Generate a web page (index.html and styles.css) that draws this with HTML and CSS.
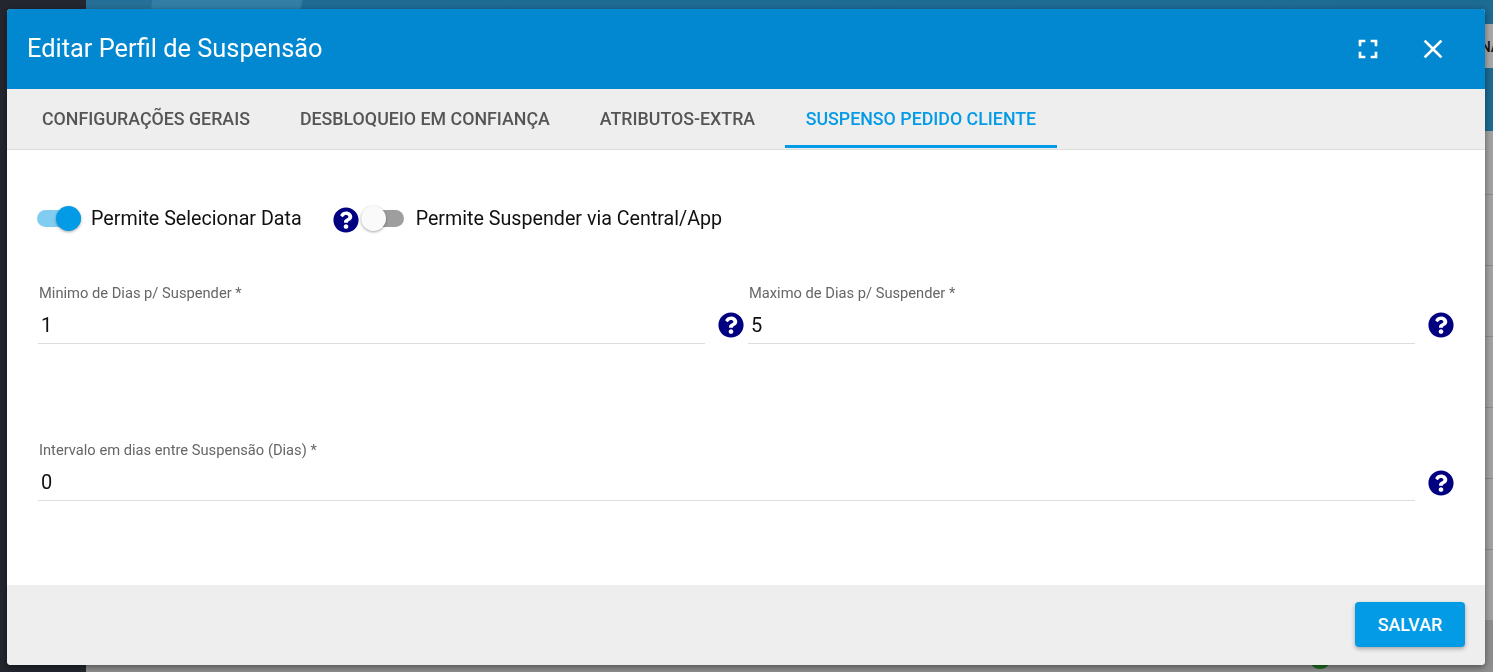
FILE: index.html
```html
<!DOCTYPE html>
<html lang="pt-BR">
<head>
<meta charset="utf-8">
<title>Editar Perfil de Suspensão</title>
<link rel="stylesheet" href="styles.css">
</head>
<body>
<div class="backdrop">
  <aside class="side"></aside>
  <div class="page">
    <div class="band-a"></div>
    <div class="band-b"><span class="band-text">NA</span></div>
    <div class="band-c"></div>
    <div class="rows">
      <div class="row"></div><div class="row"></div><div class="row"></div><div class="row"></div><div class="row"></div><div class="row"></div><div class="row"></div>
      <span class="dot"></span>
    </div>
  </div>
</div>
<section class="modal">
  <header class="head">
    <h1 class="title">Editar Perfil de Suspensão</h1>
    <div class="head-icons">
      <svg class="head-icon" viewBox="0 0 24 24"><path d="M7 14H5v5h5v-2H7v-3zm-2-4h2V7h3V5H5v5zm12 7h-3v2h5v-5h-2v3zM14 5v2h3v3h2V5h-5z"/></svg>
      <svg class="head-icon" viewBox="0 0 24 24"><path d="M19 6.41L17.59 5 12 10.59 6.41 5 5 6.41 10.59 12 5 17.59 6.41 19 12 13.41 17.59 19 19 17.59 13.41 12z"/></svg>
    </div>
  </header>
  <nav class="tabs">
    <div class="tab">Configurações Gerais</div>
    <div class="tab">Desbloqueio em Confiança</div>
    <div class="tab">Atributos-Extra</div>
    <div class="tab tab-active">Suspenso Pedido Cliente</div>
  </nav>
  <main class="content">
    <div class="toggles">
      <div class="toggle toggle-on"><span class="track"></span><span class="thumb"></span></div>
      <span class="toggle-label first-label">Permite Selecionar Data</span>
      <svg class="help" viewBox="0 0 512 512"><path d="M504 256c0 136.997-111.043 248-248 248S8 392.997 8 256C8 119.083 119.043 8 256 8s248 111.083 248 248zM262.655 90c-54.497 0-89.255 22.957-116.549 63.758-3.536 5.286-2.353 12.415 2.715 16.258l34.699 26.31c5.205 3.947 12.621 3.008 16.665-2.122 17.864-22.658 30.113-35.797 57.303-35.797 20.429 0 45.698 13.148 45.698 32.958 0 14.976-12.363 22.667-32.534 33.976C247.128 238.528 216 254.941 216 296v4c0 6.627 5.373 12 12 12h56c6.627 0 12-5.373 12-12v-1.333c0-28.462 83.186-29.647 83.186-106.667 0-58.002-60.165-102-116.531-102zM256 338c-25.365 0-46 20.635-46 46 0 25.364 20.635 46 46 46s46-20.636 46-46c0-25.365-20.635-46-46-46z"/></svg>
      <div class="toggle toggle-off"><span class="track"></span><span class="thumb"></span></div>
      <span class="toggle-label">Permite Suspender via Central/App</span>
    </div>
    <div class="fields">
      <div class="cell">
        <div class="field"><label class="label">Minimo de Dias p/ Suspender *</label><div class="value">1</div></div>
        <svg class="help" viewBox="0 0 512 512"><path d="M504 256c0 136.997-111.043 248-248 248S8 392.997 8 256C8 119.083 119.043 8 256 8s248 111.083 248 248zM262.655 90c-54.497 0-89.255 22.957-116.549 63.758-3.536 5.286-2.353 12.415 2.715 16.258l34.699 26.31c5.205 3.947 12.621 3.008 16.665-2.122 17.864-22.658 30.113-35.797 57.303-35.797 20.429 0 45.698 13.148 45.698 32.958 0 14.976-12.363 22.667-32.534 33.976C247.128 238.528 216 254.941 216 296v4c0 6.627 5.373 12 12 12h56c6.627 0 12-5.373 12-12v-1.333c0-28.462 83.186-29.647 83.186-106.667 0-58.002-60.165-102-116.531-102zM256 338c-25.365 0-46 20.635-46 46 0 25.364 20.635 46 46 46s46-20.636 46-46c0-25.365-20.635-46-46-46z"/></svg>
      </div>
      <div class="cell">
        <div class="field"><label class="label">Maximo de Dias p/ Suspender *</label><div class="value">5</div></div>
        <svg class="help" viewBox="0 0 512 512"><path d="M504 256c0 136.997-111.043 248-248 248S8 392.997 8 256C8 119.083 119.043 8 256 8s248 111.083 248 248zM262.655 90c-54.497 0-89.255 22.957-116.549 63.758-3.536 5.286-2.353 12.415 2.715 16.258l34.699 26.31c5.205 3.947 12.621 3.008 16.665-2.122 17.864-22.658 30.113-35.797 57.303-35.797 20.429 0 45.698 13.148 45.698 32.958 0 14.976-12.363 22.667-32.534 33.976C247.128 238.528 216 254.941 216 296v4c0 6.627 5.373 12 12 12h56c6.627 0 12-5.373 12-12v-1.333c0-28.462 83.186-29.647 83.186-106.667 0-58.002-60.165-102-116.531-102zM256 338c-25.365 0-46 20.635-46 46 0 25.364 20.635 46 46 46s46-20.636 46-46c0-25.365-20.635-46-46-46z"/></svg>
      </div>
      <div class="cell cell-wide">
        <div class="field"><label class="label">Intervalo em dias entre Suspensão (Dias) *</label><div class="value">0</div></div>
        <svg class="help" viewBox="0 0 512 512"><path d="M504 256c0 136.997-111.043 248-248 248S8 392.997 8 256C8 119.083 119.043 8 256 8s248 111.083 248 248zM262.655 90c-54.497 0-89.255 22.957-116.549 63.758-3.536 5.286-2.353 12.415 2.715 16.258l34.699 26.31c5.205 3.947 12.621 3.008 16.665-2.122 17.864-22.658 30.113-35.797 57.303-35.797 20.429 0 45.698 13.148 45.698 32.958 0 14.976-12.363 22.667-32.534 33.976C247.128 238.528 216 254.941 216 296v4c0 6.627 5.373 12 12 12h56c6.627 0 12-5.373 12-12v-1.333c0-28.462 83.186-29.647 83.186-106.667 0-58.002-60.165-102-116.531-102zM256 338c-25.365 0-46 20.635-46 46 0 25.364 20.635 46 46 46s46-20.636 46-46c0-25.365-20.635-46-46-46z"/></svg>
      </div>
    </div>
  </main>
  <footer class="foot">
    <button class="save" type="button">SALVAR</button>
  </footer>
</section>
</body>
</html>
```
FILE: styles.css
```css
* { box-sizing: border-box; }
html, body { margin: 0; height: 100%; overflow: hidden; }
body { font-family: Roboto, "Liberation Sans", sans-serif; color: #111; background: #23262f; }

.backdrop { display: flex; height: 672px; }
.side { width: 86px; flex: none; background: #23262f; }
.page { flex: 1; display: flex; flex-direction: column; overflow: hidden; }
.band-a { height: 24px; flex: none; background: linear-gradient(100deg, #266f98 0, #266f98 65px, #327ea5 66px, #327ea5 212px, #1f6b94 214px, #1d6a93 100%); }
.band-b { height: 44px; flex: none; background: #a8a8a8; text-align: right; font-size: 14px; line-height: 47px; font-weight: 500; color: #111; white-space: nowrap; overflow: hidden; }
.band-text { display: inline-block; margin-right: -7px; }
.band-c { height: 63px; flex: none; background: #1e6a92; }
.rows { flex: 1; position: relative; background: #8e8e8e; }
.row { height: 71px; background: #a2a2a2; border-bottom: 1px solid #8a8a8a; margin-left: 40px; border-left: 1px solid #8a8a8a; }
.row:first-child { height: 64px; }
.dot { position: absolute; left: 1223px; top: 516px; width: 22px; height: 22px; border-radius: 50%; background: #1a6d1c; }

.modal { position: fixed; left: 7px; top: 9px; width: 1478px; height: 656px; display: flex; flex-direction: column; border-radius: 4px; overflow: hidden; background: #fff; box-shadow: 0 2px 6px rgba(0, 0, 0, .45); }

.head { height: 80px; flex: none; display: flex; align-items: center; justify-content: space-between; background: #0288d1; color: #fff; padding-left: 20px; }
.title { margin: 0; font-size: 25.4px; font-weight: 400; line-height: 32px; position: relative; top: -1px; }
.head-icons { display: flex; gap: 33px; padding-right: 36px; }
.head-icon { width: 32px; height: 32px; fill: #fff; display: block; }

.tabs { height: 61px; flex: none; display: flex; gap: 10px; padding-left: 15px; background: #eee; border-bottom: 1px solid #ddd; }
.tab { padding: 0 20px; font-size: 17.8px; font-weight: 500; line-height: 60px; text-transform: uppercase; color: #555; border-bottom: 3px solid transparent; height: 59px; white-space: nowrap; }
.tab-active { color: #039be5; border-bottom-color: #039be5; padding: 0 20.5px; }

.content { flex: 1; padding: 55px 27px 0 30px; min-height: 0; }

.toggles { display: flex; align-items: center; height: 27px; }
.toggle { position: relative; width: 44px; height: 25px; flex: none; }
.track { position: absolute; left: 0; right: 0; top: 4px; height: 17px; border-radius: 9px; }
.thumb { position: absolute; top: 0; width: 25px; height: 25px; border-radius: 50%; box-shadow: 0 1px 3px rgba(0, 0, 0, .35); }
.toggle-on .track { background: #81cdf2; }
.toggle-on .thumb { right: 0; background: #039be5; }
.toggle-off { width: 43px; margin-left: 2px; margin-right: 12px; }
.toggle-off .track { background: #9e9e9e; }
.toggle-off .thumb { left: 0; background: #fafafa; }
.toggle-label { font-size: 19.68px; line-height: 27px; color: #111; white-space: nowrap; }
.toggles > .toggle-on { margin-right: 10px; }
.first-label { margin-right: 31px; }
.help { width: 26px; height: 26px; fill: #000080; flex: none; display: block; }
.toggles .help { position: relative; top: 1px; }

.fields { display: grid; grid-template-columns: 710px 710px; row-gap: 73px; margin-top: 52px; margin-left: 1px; }
.cell { display: flex; align-items: flex-start; height: 84px; }
.cell-wide { grid-column: 1 / 3; }
.cell .help { margin-left: 13px; margin-top: 28px; }
.cell-wide .help { margin-top: 29px; }
.field { flex: none; width: 667px; height: 60px; border-bottom: 1px solid #ddd; }
.cell-wide .field { width: 1377px; }
.label { display: block; padding: 1px 0 0 1px; font-size: 14.7px; line-height: 16px; color: #666; height: 23px; white-space: nowrap; }
.value { padding-left: 3px; font-size: 20px; line-height: 36px; color: #111; height: 36px; }

.foot { height: 80px; flex: none; display: flex; justify-content: flex-end; align-items: flex-start; background: #eee; padding: 17px 20px 0 0; }
.save { width: 110px; height: 45px; border: 0; border-radius: 4px; background: #039be5; color: #fff; font-family: Roboto, "Liberation Sans", sans-serif; font-size: 17.8px; font-weight: 500; box-shadow: 0 2px 4px rgba(0, 0, 0, .3); padding: 0; }
```
